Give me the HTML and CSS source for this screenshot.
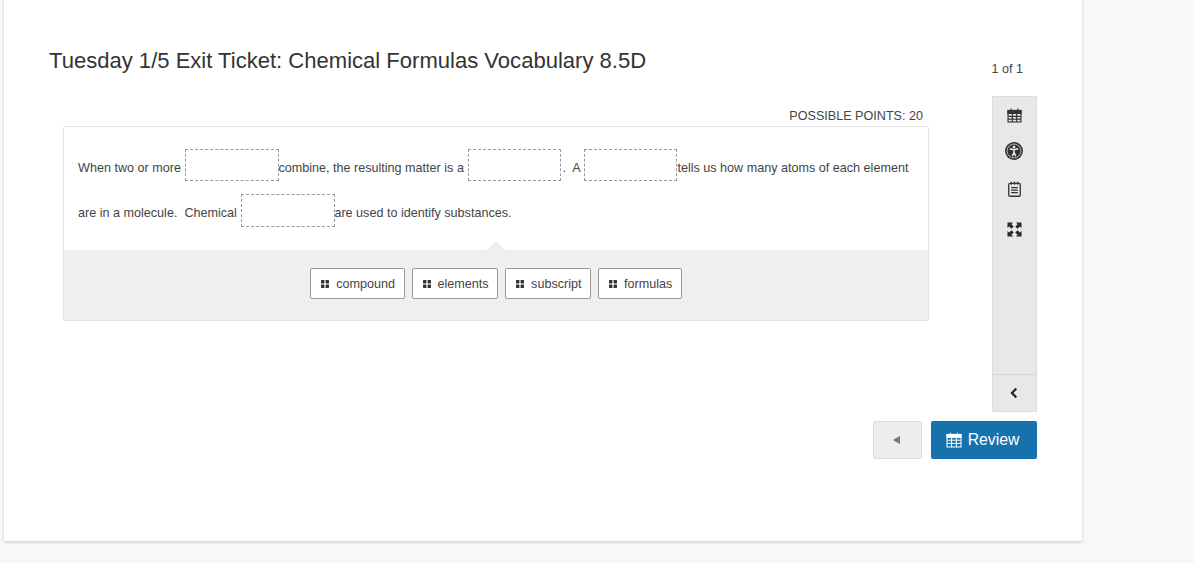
FILE: index.html
```html
<!DOCTYPE html>
<html lang="en">
<head>
    <meta charset="UTF-8">
    <title>Exit Ticket</title>
    <link rel="stylesheet" href="styles.css">
</head>
<body>
    <div class="sheet">
        <div class="header">
            <h1>Tuesday 1/5 Exit Ticket: Chemical Formulas Vocabulary 8.5D</h1>
            <span class="counter">1 of 1</span>
        </div>
        <div class="body">
            <div class="main">
                <div class="points">POSSIBLE POINTS: 20</div>
                <div class="card">
                    <div class="question">
                        When two or more <span class="blank"></span>combine, the resulting matter is a <span class="blank blank-second"></span>.&nbsp; A <span class="blank blank-third"></span>tells us how many atoms of each element are in a molecule.&nbsp; Chemical <span class="blank blank-last"></span>are used to identify substances.
                    </div>
                    <div class="bank">
                        <button class="chip"><svg class="grip" viewBox="0 0 8 8"><rect width="3.4" height="3.4" rx=".6"/><rect x="4.6" width="3.4" height="3.4" rx=".6"/><rect y="4.6" width="3.4" height="3.4" rx=".6"/><rect x="4.6" y="4.6" width="3.4" height="3.4" rx=".6"/></svg>compound</button>
                        <button class="chip"><svg class="grip" viewBox="0 0 8 8"><rect width="3.4" height="3.4" rx=".6"/><rect x="4.6" width="3.4" height="3.4" rx=".6"/><rect y="4.6" width="3.4" height="3.4" rx=".6"/><rect x="4.6" y="4.6" width="3.4" height="3.4" rx=".6"/></svg>elements</button>
                        <button class="chip"><svg class="grip" viewBox="0 0 8 8"><rect width="3.4" height="3.4" rx=".6"/><rect x="4.6" width="3.4" height="3.4" rx=".6"/><rect y="4.6" width="3.4" height="3.4" rx=".6"/><rect x="4.6" y="4.6" width="3.4" height="3.4" rx=".6"/></svg>subscript</button>
                        <button class="chip"><svg class="grip" viewBox="0 0 8 8"><rect width="3.4" height="3.4" rx=".6"/><rect x="4.6" width="3.4" height="3.4" rx=".6"/><rect y="4.6" width="3.4" height="3.4" rx=".6"/><rect x="4.6" y="4.6" width="3.4" height="3.4" rx=".6"/></svg>formulas</button>
                    </div>
                </div>
            </div>
            <div class="sidebar">
                <div class="tools">
                    <!-- calendar -->
                    <svg class="tool" viewBox="0 0 16 16" fill="none" stroke="#333" stroke-width="1.2"><rect x="1.1" y="3" width="13.8" height="11.9"/><rect x="1" y="2.6" width="14" height="3.2" fill="#333"/><path d="M4.5 .4v2.6M11.5 .4v2.6M1.2 8.9h13.6M1.2 11.9h13.6M5.7 5.8v9M10.3 5.8v9"/></svg>
                    <!-- accessibility -->
                    <svg class="tool tool-round" viewBox="0 0 18 18"><circle cx="9" cy="9" r="9" fill="#333"/><circle cx="9" cy="9" r="7" fill="none" stroke="#ddd" stroke-width=".8"/><circle cx="9" cy="5" r="1.3" fill="#eee"/><path d="M4.8 6.7 9 7.7l4.2-1M9 7.7v3M9 10.4l-1.8 3.8M9 10.4l1.8 3.8" fill="none" stroke="#eee" stroke-width="1.4"/></svg>
                    <!-- notepad -->
                    <svg class="tool tool-note" viewBox="0 0 14 17" fill="none" stroke="#333" stroke-width="1.4"><rect x=".8" y="2.4" width="12.4" height="13.9" rx="1.4"/><path d="M3.6 .6v3.4M7 .6v3.4M10.4 .6v3.4M3.4 7h7.2M3.4 9.7h7.2M3.4 12.4h7.2"/></svg>
                    <!-- fullscreen -->
                    <svg class="tool tool-full" viewBox="0 0 16 16" fill="#2b2b2b"><path d="M.5.5h6L4.7 2.3 7.2 4.8 4.8 7.2 2.3 4.7.5 6.5zM15.5.5v6l-1.8-1.8-2.5 2.5-2.4-2.4 2.5-2.5L9.5.5zM.5 15.5v-6l1.8 1.8 2.5-2.5 2.4 2.4-2.5 2.5 1.8 1.8zM15.5 15.5h-6l1.8-1.8-2.5-2.5 2.4-2.4 2.5 2.5 1.8-1.8z"/></svg>
                </div>
                <div class="collapse">
                    <svg class="chevron" viewBox="0 0 8 12" fill="none" stroke="#222" stroke-width="2.2"><path d="M6.3 1.6 2 6l4.3 4.4"/></svg>
                </div>
            </div>
        </div>
        <div class="footer">
            <button class="btn-prev"><span class="arrow"></span></button>
            <button class="btn-review"><svg class="review-icon" viewBox="0 0 16 16" fill="none" stroke="#fff" stroke-width="1"><rect x="1" y="2.6" width="14" height="12.4"/><rect x="1" y="2.4" width="14" height="3" fill="#fff"/><path d="M4.5 .8v2.6M11.5 .8v2.6M1 8.2h14M1 11.4h14M5.6 5.4V15M10.4 5.4V15"/></svg>Review</button>
        </div>
    </div>
</body>
</html>
```

FILE: styles.css
```css
html, body {
    margin: 0;
    height: 100%;
}
body {
    font-family: "Liberation Sans", Arial, sans-serif;
    background-color: #f9f8f6;
    color: #444;
    overflow: hidden;
}
.sheet {
    box-sizing: border-box;
    width: 1078px;
    height: 541px;
    margin-left: 4px;
    padding: 0 45px;
    background: #fff;
    box-shadow: 0 1px 3px rgba(0, 0, 0, 0.2);
}
.header {
    display: flex;
    justify-content: space-between;
    height: 96px;
}
h1 {
    margin: 48px 0 0;
    font-size: 22.05px;
    font-weight: 400;
    line-height: 26px;
    color: #333;
}
.counter {
    margin: 62px 14px 0 0;
    font-size: 12.6px;
    line-height: 15px;
}
.body {
    display: flex;
    gap: 63px;
}
.main {
    width: 866px;
    margin-left: 14px;
}
.points {
    height: 17px;
    margin-top: 13px;
    padding-right: 6px;
    font-size: 12.6px;
    line-height: 15px;
    text-align: right;
}
.card {
    border: 1px solid #e4e4e4;
    border-radius: 2px;
    width: 866px;
    box-sizing: border-box;
}
.question {
    position: relative;
    height: 123px;
    box-sizing: border-box;
    padding: 19px 14px 0;
    font-size: 12.6px;
    line-height: 45px;
}
.question::after {
    content: "";
    position: absolute;
    left: 423px;
    bottom: 0;
    width: 0;
    height: 0;
    border: 9px solid transparent;
    border-top: 0;
    border-bottom-color: #efefef;
}
.blank {
    display: inline-block;
    box-sizing: border-box;
    width: 94px;
    height: 32px;
    margin: 0 -1px 0 1px;
    border: 1px dashed #999;
    vertical-align: -9px;
}
.blank-second {
    width: 93px;
    margin-right: 1px;
}
.blank-third {
    width: 93px;
    margin-right: 0;
}
.blank-last {
    height: 33px;
    vertical-align: -10px;
}
.bank {
    display: flex;
    justify-content: center;
    gap: 7px;
    height: 70px;
    padding-top: 18px;
    box-sizing: border-box;
    background: #efefef;
}
.chip {
    display: flex;
    align-items: center;
    height: 31px;
    padding: 0 8.5px 0 10px;
    border: 1px solid #999;
    border-radius: 2px;
    background: #fff;
    color: #444;
    font-family: inherit;
    font-size: 12.6px;
}
.grip {
    width: 8px;
    height: 8px;
    margin-right: 7px;
    fill: #333;
}
.sidebar {
    display: flex;
    flex-direction: column;
    box-sizing: border-box;
    width: 45px;
    height: 316px;
    border: 1px solid #ddd;
    background: #e8e8e8;
}
.tools {
    flex: 1;
    display: flex;
    flex-direction: column;
    align-items: center;
    padding-top: 11px;
    gap: 20px;
}
.tool {
    width: 15px;
    height: 15px;
    flex: none;
}
.tool-round {
    width: 18px;
    height: 18px;
    margin: -1px 1px 0 0;
}
.tool-note {
    width: 13px;
    height: 16px;
    margin: 1px 0 0 0;
}
.tool-full {
    margin-top: 5px;
}
.collapse {
    display: flex;
    align-items: center;
    justify-content: center;
    height: 36px;
    padding-right: 1px;
    border-top: 1px solid #d4d4d4;
}
.chevron {
    width: 8px;
    height: 12px;
}
.footer {
    display: flex;
    justify-content: flex-end;
    gap: 9px;
    margin-top: 9px;
}
.btn-prev {
    display: flex;
    align-items: center;
    justify-content: center;
    width: 49px;
    height: 38px;
    padding: 0 2px 0 0;
    border: 1px solid #ddd;
    border-radius: 2px;
    background: #eee;
}
.arrow {
    width: 0;
    height: 0;
    border: 4px solid transparent;
    border-left: 0;
    border-right: 7px solid #777;
}
.btn-review {
    display: flex;
    align-items: center;
    justify-content: center;
    width: 106px;
    height: 38px;
    padding: 0 3px 0 0;
    border: none;
    border-radius: 2px;
    background: #1672ad;
    color: #fff;
    font-family: inherit;
    font-size: 15.75px;
}
.review-icon {
    width: 16px;
    height: 16px;
    margin-right: 6px;
}
```
